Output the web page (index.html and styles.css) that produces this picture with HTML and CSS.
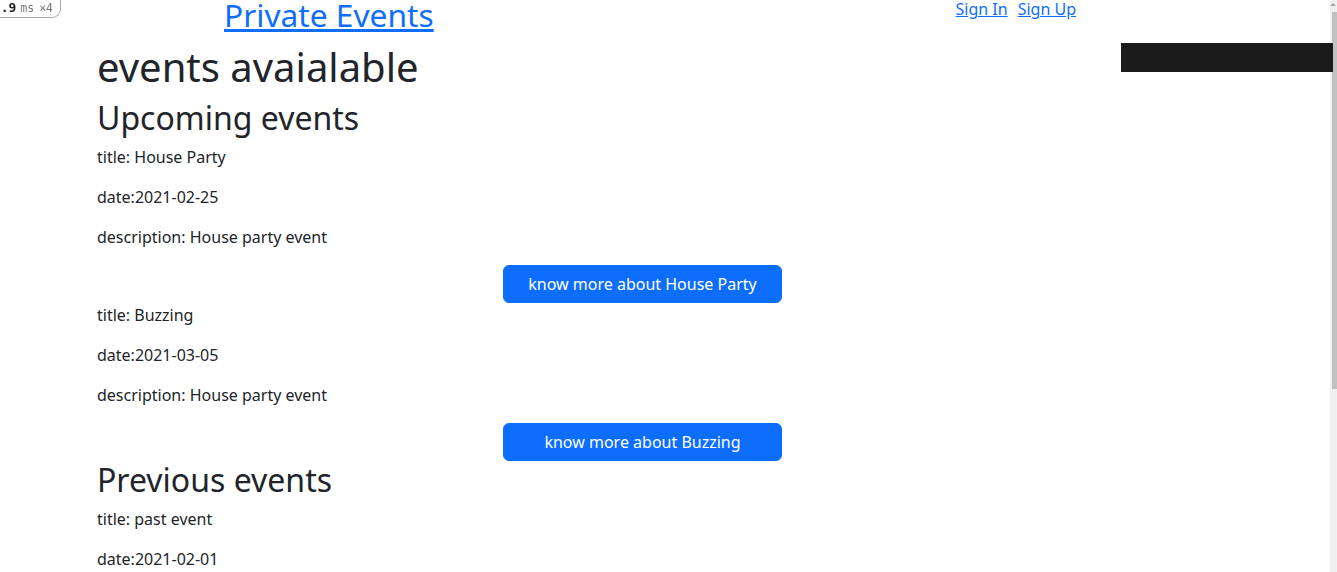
FILE: index.html
```html
<!DOCTYPE html>
<html lang="en">
<head>
<meta charset="utf-8">
<title>Private Events</title>
<link rel="stylesheet" href="styles.css">
</head>
<body>
<div class="profiler"><span class="prof-num">12.9</span><span class="prof-unit">ms</span><span class="prof-count">×4</span></div>
<div class="blackbar"></div>
<div class="scrollbar" aria-hidden="true">
  <div class="scroll-arrow"></div>
  <div class="scroll-thumb"></div>
</div>
<div class="page">
  <header class="topbar">
    <a class="brand" href="#">Private Events</a>
    <nav class="auth">
      <a href="#">Sign In</a>
      <a href="#">Sign Up</a>
    </nav>
  </header>
  <main class="content">
    <h1 class="h1">events avaialable</h1>
    <h2 class="h2">Upcoming events</h2>
    <section class="event">
      <p>title: House Party</p>
      <p>date:2021-02-25</p>
      <p>description: House party event</p>
      <div class="actions"><a class="btn" href="#">know more about House Party</a></div>
    </section>
    <section class="event">
      <p>title: Buzzing</p>
      <p>date:2021-03-05</p>
      <p>description: House party event</p>
      <div class="actions"><a class="btn" href="#">know more about Buzzing</a></div>
    </section>
    <h2 class="h2">Previous events</h2>
    <section class="event">
      <p>title: past event</p>
      <p>date:2021-02-01</p>
      <p>description: past event</p>
      <div class="actions"><a class="btn" href="#">know more about past event</a></div>
    </section>
  </main>
</div>
</body>
</html>
```
FILE: styles.css
```css
* { box-sizing: border-box; }
html { overflow: hidden; }
html, body { margin: 0; padding: 0; }
body {
  font-family: "Noto Sans", "DejaVu Sans", sans-serif;
  font-size: 16px;
  line-height: 1.5;
  color: #212529;
  background: #fff;
}
a { color: #0d6efd; text-decoration: underline; }

.profiler {
  position: fixed;
  top: 0;
  left: -19px;
  height: 18px;
  padding: 0 7px 0 4px;
  border: 1px solid #a9a9a9;
  border-top: 0;
  border-left: 0;
  border-radius: 0 0 9px 0;
  background: #fff;
  font-family: "DejaVu Sans Mono", monospace;
  line-height: 16px;
  display: flex;
  align-items: baseline;
  z-index: 10;
}
.prof-num { color: #222; font-weight: bold; font-size: 13px; }
.prof-unit, .prof-count { color: #777; font-size: 11.5px; }
.prof-unit { margin-left: 4px; }
.prof-count { margin-left: 5px; }

.blackbar {
  position: absolute;
  top: 43px;
  left: 1121px;
  width: 212px;
  height: 29px;
  background: #1b1b1b;
  z-index: 2;
}

.scrollbar {
  position: fixed;
  top: 0;
  right: 0;
  width: 7px;
  height: 100%;
  background: #f0f0f0;
  z-index: 1;
}
.scroll-arrow {
  position: absolute;
  top: 3px;
  right: 1px;
  width: 0;
  height: 0;
  border-left: 3px solid transparent;
  border-right: 3px solid transparent;
  border-bottom: 3px solid #a3a3a3;
}
.scroll-thumb {
  position: absolute;
  top: 12px;
  right: 0;
  width: 5px;
  height: 377px;
  background: #c1c1c1;
}

.page {
  width: 1091px;
  margin-left: 97px;
  padding-bottom: 175px;
}
.topbar {
  display: flex;
  justify-content: space-between;
  align-items: flex-start;
  height: 42.6px;
  padding-left: 127px;
  padding-right: 112px;
}
.brand {
  font-size: 31.7px;
  line-height: 1;
  margin-top: -1px;
}
.auth {
  display: flex;
  gap: 10px;
  line-height: 18px;
}
.content { display: flex; flex-direction: column; }
.h1, .h2 {
  margin: 0 0 8px;
  font-weight: 400;
  line-height: 1.2;
}
.h1 { font-size: 40px; }
.h2 { font-size: 32px; }
.event p { margin: 0 0 16px; }
.actions { display: flex; justify-content: center; }
.btn {
  display: block;
  width: 279px;
  padding: 6px 12px;
  border: 1px solid #0d6efd;
  border-radius: 6px;
  background: #0d6efd;
  color: #fff;
  text-decoration: none;
  text-align: center;
  line-height: 24px;
}
```
